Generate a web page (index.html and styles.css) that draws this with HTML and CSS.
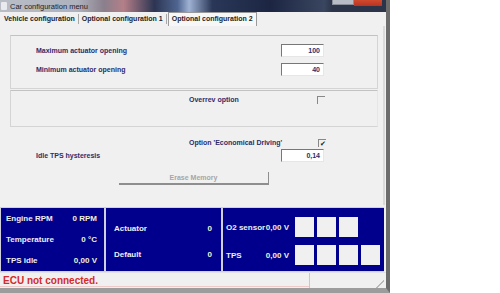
FILE: index.html
```html
<!DOCTYPE html>
<html lang="en">
<head>
  <meta charset="UTF-8">
  <title>Car configuration menu</title>
  <link rel="stylesheet" href="styles.css">
</head>
<body>
  <div class="window">
    <div class="titlebar">
      <span class="app-icon"></span>
      <span class="title">Car configuration menu</span>
      <span class="caption-btn max"></span>
      <span class="caption-btn close"></span>
    </div>

    <div class="tabs">
      <span class="tab">Vehicle configuration</span>
      <span class="tab">Optional configuration 1</span>
      <span class="tab active">Optional configuration 2</span>
    </div>

    <div class="page">
      <div class="group actuator">
        <div class="row">
          <span class="label wide">Maximum actuator opening</span>
          <span class="field">100</span>
        </div>
        <div class="row">
          <span class="label wide">Minimum actuator opening</span>
          <span class="field">40</span>
        </div>
      </div>

      <div class="group overrev">
        <div class="row check-row">
          <span class="label narrow">Overrev option</span>
          <span class="checkbox"></span>
        </div>
      </div>

      <div class="row check-row economy">
        <span class="label narrow">Option 'Economical Driving'</span>
        <span class="checkbox checked">&#10004;</span>
      </div>

      <div class="row hysteresis">
        <span class="label wide">Idle TPS hysteresis</span>
        <span class="field">0,14</span>
      </div>

      <div class="erase">Erase Memory</div>
    </div>

    <div class="gauges">
      <div class="gauge engine">
        <div class="reading"><span>Engine RPM</span><span class="value">0 RPM</span></div>
        <div class="reading"><span>Temperature</span><span class="value">0 &deg;C</span></div>
        <div class="reading"><span>TPS idle</span><span class="value">0,00 V</span></div>
      </div>
      <div class="gauge actuator-state">
        <div class="reading"><span>Actuator</span><span class="value">0</span></div>
        <div class="reading"><span>Default</span><span class="value">0</span></div>
      </div>
      <div class="gauge sensors">
        <div class="sensor-row">
          <div class="reading"><span>O2 sensor</span><span class="value">0,00 V</span></div>
          <span class="lamp"></span><span class="lamp"></span><span class="lamp"></span>
        </div>
        <div class="sensor-row">
          <div class="reading"><span>TPS</span><span class="value">0,00 V</span></div>
          <span class="lamp"></span><span class="lamp"></span><span class="lamp"></span><span class="lamp"></span>
        </div>
      </div>
    </div>

    <div class="statusbar">
      <span class="status-text">ECU not connected.</span>
      <span class="status-cell"></span>
      <span class="grip"></span>
    </div>
  </div>
</body>
</html>
```

FILE: styles.css
```css
body {
  margin: 0;
  width: 500px;
  height: 293px;
  overflow: hidden;
  background: #fff;
  font-family: "Liberation Sans", Arial, sans-serif;
  display: flex;
}

.window {
  width: 386px;
  height: 288px;
  background: #f0f0f0;
  border-right: 4px solid #6c6c6c;
  border-bottom: 5px solid #9c9c9c;
  display: flex;
  flex-direction: column;
}

/* title bar, blurred glass look */
.titlebar {
  height: 12px;
  display: flex;
  align-items: center;
  background: linear-gradient(90deg, #b9bdc6 0%, #aeb2bd 20%, #8a7f8c 27%, #b47f88 32%, #2c3552 40%, #4f6590 46%, #9fb2d4 49%, #2a3757 55%, #1c2643 70%, #3a4660 84%, #2b3449 86%);
}

.app-icon {
  width: 6px;
  height: 8px;
  margin-left: 1px;
  background: #e8eaee;
  border-radius: 1px;
}

.title {
  margin-left: 3px;
  font-size: 7.5px;
  color: #1b1e28;
  flex: 1;
}

.caption-btn {
  height: 6px;
  align-self: flex-start;
}

.caption-btn.max {
  width: 20px;
  background: #b8bcc4;
  border: 1px solid #8a8e98;
  border-top: none;
  height: 4px;
}

.caption-btn.close {
  width: 28px;
  margin-right: 4px;
  background: linear-gradient(#d04a30, #b83420);
}

/* tabs */
.tabs {
  height: 14px;
  display: flex;
  align-items: stretch;
  padding-left: 3px;
}

.tab {
  font-size: 7px;
  font-weight: bold;
  color: #22232c;
  padding: 0 3px 0 1px;
  line-height: 14px;
  border-right: 1px solid #a8a8a8;
  margin-right: 2px;
  height: 10px;
  align-self: center;
  line-height: 10px;
}

.tab.active {
  height: 13px;
  line-height: 11px;
  align-self: flex-start;
  padding: 0 3px;
  margin-left: -1px;
  background: #f7f7f7;
  border: 1px solid #9a9a9a;
  border-bottom: none;
}

/* tab page */
.page {
  height: 179px;
  padding: 9px 0 0 10px;
  box-sizing: border-box;
  border-right: 2px solid #dadada;
  margin-right: 1px;
}

.group {
  width: 368px;
  box-sizing: border-box;
  border: 1px solid #d4d4d4;
  border-top-color: #c2c2c2;
}

.group.actuator {
  height: 54px;
  padding: 8px 0 0 25px;
  display: flex;
  flex-direction: column;
  gap: 6px;
}

.group.overrev {
  height: 37px;
  margin-top: 1px;
  padding: 4px 0 0 178px;
  border-right-color: #e6e6e6;
}

.row {
  display: flex;
  align-items: center;
  height: 13px;
}

.check-row {
  height: 9px;
}

.label {
  font-size: 7px;
  font-weight: bold;
  color: #2c2d6c;
  white-space: nowrap;
}

.label.wide {
  width: 245px;
}

.label.narrow {
  width: 128px;
}

.field {
  width: 43px;
  height: 13px;
  box-sizing: border-box;
  background: #fff;
  border: 1px solid #e6e6e6;
  border-top-color: #777;
  border-left-color: #777;
  font-size: 7px;
  font-weight: bold;
  color: #2c2d6c;
  text-align: right;
  padding-right: 3px;
  line-height: 11px;
}

.checkbox {
  width: 8px;
  height: 8px;
  box-sizing: border-box;
  border-top: 1px solid #888;
  border-left: 1px solid #888;
  font-size: 7px;
  line-height: 7px;
  color: #222;
  text-align: center;
}

.economy {
  margin-top: 11px;
  padding-left: 179px;
}

.economy .checkbox {
  margin-left: 1px;
}

.hysteresis {
  margin-top: 2px;
  padding-left: 26px;
}

.erase {
  width: 150px;
  height: 13px;
  margin: 10px 0 0 109px;
  box-sizing: border-box;
  border-right: 1px solid #8e8e8e;
  border-bottom: 2px solid #8e8e8e;
  text-align: center;
  font-size: 7px;
  font-weight: bold;
  color: #a6a6a6;
  line-height: 11px;
}

/* live data panel */
.gauges {
  margin-top: 2px;
  height: 65px;
  width: 384px;
  box-sizing: border-box;
  padding: 1px 0 1px 1px;
  background: #cfd0dc;
  display: flex;
  gap: 2px;
}

.gauge {
  background: #00008c;
  display: flex;
  flex-direction: column;
  font-size: 8px;
  font-weight: bold;
  color: #eeeef2;
}

.reading {
  display: flex;
  justify-content: space-between;
  align-items: center;
  height: 10px;
}

.value {
  color: #f2f2d6;
}

.gauge.engine {
  width: 103px;
  padding: 5px 7px 0 5px;
  box-sizing: border-box;
  gap: 11px;
}

.gauge.actuator-state {
  width: 115px;
  padding: 15px 9px 0 8px;
  box-sizing: border-box;
  gap: 16px;
}

.gauge.sensors {
  flex: 1;
  padding: 9px 0 0 3px;
  gap: 8px;
}

.sensor-row {
  display: flex;
  align-items: center;
  gap: 3px;
  height: 20px;
}

.sensor-row .reading {
  width: 63px;
  margin-right: 3px;
}

.lamp {
  width: 19px;
  height: 20px;
  background: #f0f0f0;
}

/* status bar */
.statusbar {
  height: 16px;
  display: flex;
  align-items: center;
  border-top: 1px solid #e2e2e2;
  box-sizing: border-box;
}

.status-text {
  width: 306px;
  padding-left: 3px;
  font-size: 10px;
  font-weight: bold;
  color: #d42a2a;
  border-bottom: 1px solid #efc8c8;
  line-height: 11px;
}

.status-cell {
  flex: 1;
  height: 15px;
  border-left: 1px solid #c8c8c8;
}

.grip {
  width: 8px;
  height: 8px;
  align-self: flex-end;
  margin-right: 2px;
  background: linear-gradient(135deg, transparent 50%, #b8b8b8 50%, #b8b8b8 60%, transparent 60%);
}
```
